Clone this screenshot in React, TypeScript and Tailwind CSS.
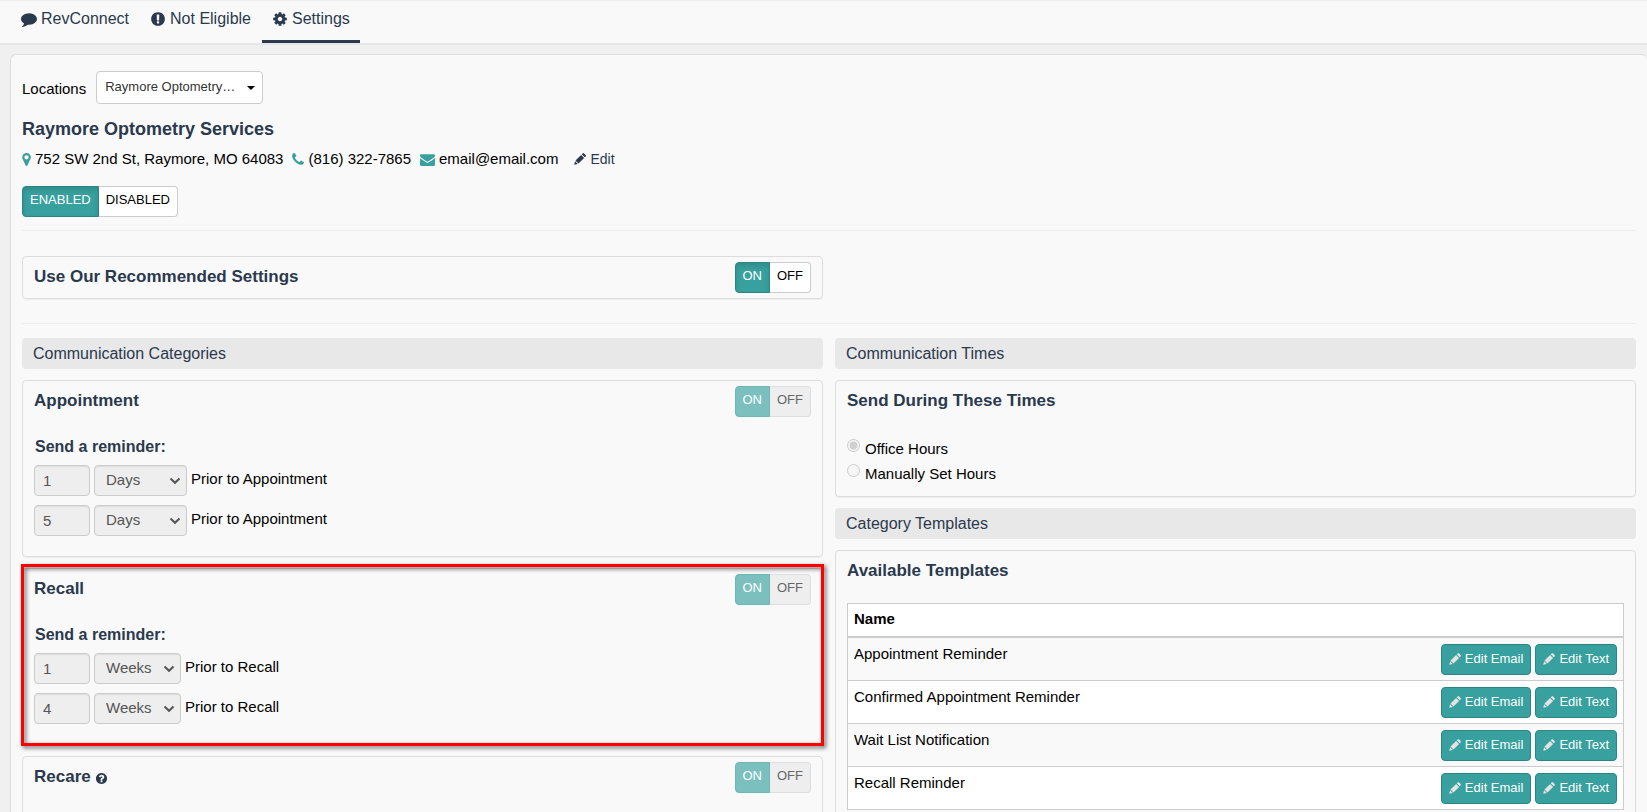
import type { ReactNode } from 'react';

const ICONS = {
  comment: 'M1792 896q0 174-120 321.5t-326 233-450 85.5q-70 0-145-8-198 175-460 242-49 14-114 22-17 2-30.5-9t-17.5-29v-1q-3-4-.5-12t2-10 4.5-9.5l6-9 7-8.5 8-9q7-8 31-34.5t34.5-38 31-39.5 32.5-51 27-59 26-76q-157-89-247.5-220t-90.5-281q0-130 71-248.5t191-204.5 286-136.5 348-50.5q244 0 450 85.5t326 233 120 321.5z',
  exclamation: 'M896 128q209 0 385.5 103t279.5 279.5 103 385.5-103 385.5-279.5 279.5-385.5 103-385.5-103-279.5-279.5-103-385.5 103-385.5 279.5-279.5 385.5-103zm128 1247v-190q0-14-9-23.5t-22-9.5h-192q-13 0-23 10t-10 23v190q0 13 10 23t23 10h192q13 0 22-9.5t9-23.5zm-2-344l18-621q0-12-10-18-10-8-24-8h-220q-14 0-24 8-10 6-10 18l17 621q0 10 10 17.5t24 7.5h185q14 0 23.5-7.5t10.5-17.5z',
  cog: 'M1152 896q0-106-75-181t-181-75-181 75-75 181 75 181 181 75 181-75 75-181zm512-109v222q0 12-8 23t-20 13l-185 28q-19 54-39 91 35 50 107 138 10 12 10 25t-9 23q-27 37-99 108t-94 71q-12 0-26-9l-138-108q-44 23-91 38-16 136-29 186-7 28-36 28h-222q-14 0-24.5-8.5t-11.5-21.5l-28-184q-49-16-90-37l-141 107q-10 9-25 9-14 0-25-11-126-114-165-168-7-10-7-23 0-12 8-23 15-21 51-66.5t54-70.5q-27-50-41-99l-183-27q-13-2-21-12.5t-8-23.5v-222q0-12 8-23t19-13l186-28q14-46 39-92-40-57-107-138-10-12-10-24 0-10 9-23 26-36 98.5-107.5t94.5-71.5q13 0 26 10l138 107q44-23 91-38 16-136 29-186 7-28 36-28h222q14 0 24.5 8.5t11.5 21.5l28 184q49 16 90 37l142-107q9-9 24-9 13 0 25 10 129 119 165 170 7 8 7 22 0 12-8 23-15 21-51 66.5t-54 70.5q26 50 41 98l183 28q13 2 21 12.5t8 23.5z',
  phone: 'M1600 1240q0 27-10 70.5t-21 68.5q-21 50-122 106-94 51-186 51-27 0-53-3.5t-57.5-12.5-47-14.5-55.5-20.5-49-18q-98-35-175-83-127-79-264-216t-216-264q-48-77-83-175-3-9-18-49t-20.5-55.5-14.5-47-12.5-57.5-3.5-53q0-92 51-186 56-101 106-122 25-11 68.5-21t70.5-10q14 0 21 3 18 6 53 76 11 19 30 54t35 63.5 31 53.5q3 4 17.5 25t21.5 35.5 7 28.5q0 20-28.5 50t-62 55-62 53-28.5 46q0 9 5 22.5t8.5 20.5 14 24 11.5 19q76 137 174 235t235 174q2 1 19 11.5t24 14 20.5 8.5 22.5 5q18 0 46-28.5t53-62 55-62 50-28.5q14 0 28.5 7t35.5 21.5 25 17.5q25 15 53.5 31t63.5 35 54 30q70 35 76 53 3 7 3 21z',
  marker: 'M1152 640q0-106-75-181t-181-75-181 75-75 181 75 181 181 75 181-75 75-181zm256 0q0 109-33 179l-364 774q-16 33-47.5 52t-67.5 19-67.5-19-46.5-52l-365-774q-33-70-33-179 0-212 150-362t362-150 362 150 150 362z',
  envelope: 'M1792 710v794q0 66-47 113t-113 47h-1472q-66 0-113-47t-47-113v-794q44 49 101 87 362 246 497 345 57 42 92.5 65.5t94.5 48 110 24.5h2q51 0 110-24.5t94.5-48 92.5-65.5q170-123 498-345 57-39 100-87zm0-294q0 79-49 151t-122 123q-376 261-468 325-10 7-42.5 31t-54 38.5-52 32.5-57.5 27-50 9h-2q-23 0-50-9t-57.5-27-52-32.5-54-38.5-42.5-31q-91-64-262-182.5t-205-142.5q-62-42-117-115.5t-55-136.5q0-78 41.5-130t118.5-52h1472q65 0 112.5 47t47.5 113z',
  question: 'M1024 1376v-192q0-14-9-23t-23-9h-192q-14 0-23 9t-9 23v192q0 14 9 23t23 9h192q14 0 23-9t9-23zm256-672q0-88-55.5-163t-138.5-116-170-41q-243 0-371 213-15 24 8 42l132 100q7 6 19 6 16 0 25-12 53-68 86-92 34-24 86-24 48 0 85.5 26t37.5 59q0 38-20 61t-68 45q-63 28-115.5 86.5t-52.5 125.5v36q0 14 9 23t23 9h192q14 0 23-9t9-23q0-19 21.5-49.5t54.5-49.5q32-18 49-28.5t46-35 44.5-48 28-60.5 12.5-81zm384 192q0 209-103 385.5t-279.5 279.5-385.5 103-385.5-103-279.5-279.5-103-385.5 103-385.5 279.5-279.5 385.5-103 385.5 103 279.5 279.5 103 385.5z',
};

function Icon({ name, className = '', viewBox = '0 0 1792 1792' }: { name: keyof typeof ICONS; className?: string; viewBox?: string }) {
  return (
    <svg viewBox={viewBox} fill="currentColor" aria-hidden="true" className={`shrink-0 ${className}`}>
      <path d={ICONS[name]} />
    </svg>
  );
}

function Pencil({ className = '' }: { className?: string }) {
  return (
    <svg viewBox="0 0 12 12" fill="currentColor" aria-hidden="true" className={`h-3 w-3 shrink-0 ${className}`}>
      <path d="M7.700 1.300l.9-.9a1.100 1.100 0 0 1 1.500 0l1.500 1.500a1.100 1.100 0 0 1 0 1.500l-.9.9zM7.100 1.900l3 3-5.600 5.600-3-3zM1.100 8.200l2.700 2.700L.2 11.800z" />
    </svg>
  );
}

function Toggle({ label, on = 'ON', off = 'OFF', disabled = false }: { label: string; on?: string; off?: string; disabled?: boolean }) {
  return (
    <div role="group" aria-label={label} className="flex h-[31px] text-[13px]">
      <button
        type="button"
        aria-pressed="true"
        disabled={disabled}
        className={`rounded-l border px-[7px] pb-1 text-white ${disabled ? 'border-[#6fb5b4] bg-[#7bbfbe]' : 'border-[#2d8583] bg-[#38a09e] shadow-[inset_0_3px_5px_rgba(0,0,0,0.125)]'}`}
      >
        {on}
      </button>
      <button
        type="button"
        aria-pressed="false"
        disabled={disabled}
        className={`rounded-r border border-l-0 px-[7px] pb-1 ${disabled ? 'border-[#dedede] bg-[#eee] text-[#666]' : 'border-[#ccc] bg-white text-black'}`}
      >
        {off}
      </button>
    </div>
  );
}

function Card({ title, action, children, className = '' }: { title: ReactNode; action?: ReactNode; children?: ReactNode; className?: string }) {
  return (
    <section className={`relative rounded border border-[#ddd] px-[11px] shadow-[0_1px_1px_rgba(0,0,0,0.05)] ${className}`}>
      <div className="flex h-[41px] items-start justify-between pt-[5px]">
        <h2 className="flex items-center gap-1 text-[17px] leading-[30px] font-bold text-[#2a394d]">{title}</h2>
        {action}
      </div>
      {children}
    </section>
  );
}

function SectionBar({ children }: { children: ReactNode }) {
  return <h2 className="flex h-[31px] items-center rounded bg-[#e8e8e8] px-[11px] text-base text-[#2a394d]">{children}</h2>;
}

function Reminder({ amount, unit, target }: { amount: string; unit: string; target: string }) {
  return (
    <div className="flex items-center text-[15px]">
      <input
        type="text"
        aria-label={`Number of ${unit} before ${target}`}
        defaultValue={amount}
        disabled
        className="h-[31px] w-14 rounded border border-[#ccc] bg-[#eee] px-2 text-[#555] shadow-[inset_0_1px_1px_rgba(0,0,0,0.075)]"
      />
      <div className="relative ml-1 flex">
        <select
          aria-label={`Unit before ${target}`}
          disabled
          className={`h-[31px] appearance-none rounded border border-[#ccc] bg-[#eee] pl-[11px] text-[#555] opacity-100 shadow-[inset_0_1px_1px_rgba(0,0,0,0.075)] ${unit === 'Days' ? 'w-[93px]' : 'w-[87px]'}`}
        >
          <option>{unit}</option>
        </select>
        <svg viewBox="0 0 12 8" fill="none" stroke="#555" strokeWidth="2" className="pointer-events-none absolute top-3 right-1.5 h-2 w-3">
          <path d="M1.500 1.500 6 5.800l4.500-4.300" />
        </svg>
      </div>
      <span className="ml-1 pb-0.5">Prior to {target}</span>
    </div>
  );
}

function Category({ title, unit, amounts, highlighted = false }: { title: string; unit: string; amounts: string[]; highlighted?: boolean }) {
  return (
    <Card title={title} action={<Toggle label={title} disabled />} className="h-[177px]">
      <h3 className="mt-[13px] h-[30px] pl-px text-base leading-6 font-bold text-[#2a394d]">Send a reminder:</h3>
      <div className="space-y-[9px]">
        {amounts.map((amount) => (
          <Reminder key={amount} amount={amount} unit={unit} target={title} />
        ))}
      </div>
      {highlighted && (
        <div className="pointer-events-none absolute -inset-x-0.5 -top-[5px] -bottom-0.5 border-3 border-[#f00] drop-shadow-[2px_2px_2px_rgba(0,0,0,0.6)]" />
      )}
    </Card>
  );
}

const tabs: { name: string; icon: keyof typeof ICONS; active?: boolean }[] = [
  { name: 'RevConnect', icon: 'comment' },
  { name: 'Not Eligible', icon: 'exclamation' },
  { name: 'Settings', icon: 'cog', active: true },
];

const templates = [
  'Appointment Reminder',
  'Confirmed Appointment Reminder',
  'Wait List Notification',
  'Recall Reminder',
];

export default function App() {
  return (
    <div className="min-h-screen bg-[#f0f0f0] font-['Liberation_Sans',Arial,sans-serif] text-[15px] text-black">
      <nav className="flex h-[45px] gap-px border-t border-b-2 border-t-[#eee] border-b-[#e5e5e5] bg-[#f9f9f9] pl-[11px]">
        {tabs.map((tab) => (
          <a
            key={tab.name}
            href="#"
            className={`flex items-center gap-1 border-b-3 px-2.5 pb-[3px] text-base text-[#2a394d] ${tab.active ? 'border-[#2a394d]' : 'border-transparent'}`}
          >
            <Icon name={tab.icon} className="h-4 w-4" />
            {tab.name}
          </a>
        ))}
      </nav>

      <main className="mt-[9px] ml-2.5 rounded-md border border-r-0 border-[#ddd] bg-[#f9f9f9] px-[11px] pt-4 pb-6">
        <div className="flex items-center gap-2.5">
          <label htmlFor="location" className="pt-1">Locations</label>
          <div className="relative flex">
            <select id="location" className="h-[33px] w-[167px] appearance-none rounded border border-[#ccc] bg-white pb-0.5 pl-2 text-[13px] text-[#333]">
              <option>Raymore Optometry…</option>
            </select>
            <svg viewBox="0 0 8 4" className="pointer-events-none absolute top-[15px] right-2 h-1 w-2">
              <path d="M0 0h8L4 4z" />
            </svg>
          </div>
        </div>

        <h1 className="mt-[11px] text-lg leading-7 font-bold text-[#2a394d]">Raymore Optometry Services</h1>
        <div className="mt-1 flex h-6 items-center">
          <Icon name="marker" viewBox="384 0 1024 1792" className="mr-1 h-[15px] w-[9px] text-[#38a09e]" />
          752 SW 2nd St, Raymore, MO 64083
          <Icon name="phone" viewBox="192 0 1408 1792" className="mr-1 ml-[9px] h-[15px] w-3 text-[#38a09e]" />
          (816) 322-7865
          <Icon name="envelope" className="mr-1 ml-[9px] h-[15px] w-[15px] text-[#38a09e]" />
          email@email.com
          <a href="#" className="ml-4 flex items-center gap-1 text-sm text-[#2a394d]">
            <Pencil />
            Edit
          </a>
        </div>

        <div className="mt-[15px] flex">
          <Toggle label="RevConnect status" on="ENABLED" off="DISABLED" />
        </div>
        <hr className="mt-[13px] border-[#eee]" />

        <div className="mt-[25px] grid grid-cols-2 gap-3">
          <Card title="Use Our Recommended Settings" action={<Toggle label="Use Our Recommended Settings" />} />
        </div>
        <hr className="mt-6 border-[#eee]" />

        <div className="mt-3.5 grid grid-cols-2 items-start gap-3">
          <div className="space-y-[11px]">
            <SectionBar>Communication Categories</SectionBar>
            <Category title="Appointment" unit="Days" amounts={['1', '5']} />
            <Category title="Recall" unit="Weeks" amounts={['1', '4']} highlighted />
            <Card
              title={<>Recare <Icon name="question" className="mt-0.5 h-[13px] w-[13px]" /></>}
              action={<Toggle label="Recare" disabled />}
              className="h-[177px]"
            />
          </div>

          <div className="space-y-[11px]">
            <SectionBar>Communication Times</SectionBar>
            <Card title="Send During These Times" className="h-[117px]">
              <fieldset disabled aria-label="Send during these times" className="mt-3.5">
                <label className="flex h-[25px] gap-[5px]">
                  <input type="radio" name="hours" defaultChecked className="mt-[3px] h-[13px] w-[13px]" />
                  <span className="pt-[3px] leading-5">Office Hours</span>
                </label>
                <label className="flex h-[25px] gap-[5px]">
                  <input type="radio" name="hours" className="mt-[3px] h-[13px] w-[13px]" />
                  <span className="pt-[3px] leading-5">Manually Set Hours</span>
                </label>
              </fieldset>
            </Card>
            <SectionBar>Category Templates</SectionBar>
            <Card title="Available Templates" className="pb-6">
              <table className="mt-[11px] w-full border-collapse border border-[#ccc]">
                <thead>
                  <tr className="h-[33px] bg-white">
                    <th colSpan={2} className="border-b-2 border-[#ccc] px-1.5 pb-0.5 text-left">Name</th>
                  </tr>
                </thead>
                <tbody>
                  {templates.map((name) => (
                    <tr key={name} className="border-b border-[#ccc] even:bg-white">
                      <td className="px-1.5 pt-[5px] align-top">{name}</td>
                      <td className="px-1.5 pt-1.5 pb-[5px]">
                        <div className="flex justify-end gap-1">
                          {['Edit Email', 'Edit Text'].map((text) => (
                            <button
                              key={text}
                              type="button"
                              aria-label={`${text}: ${name}`}
                              className="flex h-[31px] items-center gap-1 rounded border border-[#2d8583] bg-[#38a09e] px-[7px] pb-px text-[13px] text-white"
                            >
                              <Pencil className="text-[#e3e3e3]" />
                              {text}
                            </button>
                          ))}
                        </div>
                      </td>
                    </tr>
                  ))}
                </tbody>
              </table>
            </Card>
          </div>
        </div>
      </main>
    </div>
  );
}
